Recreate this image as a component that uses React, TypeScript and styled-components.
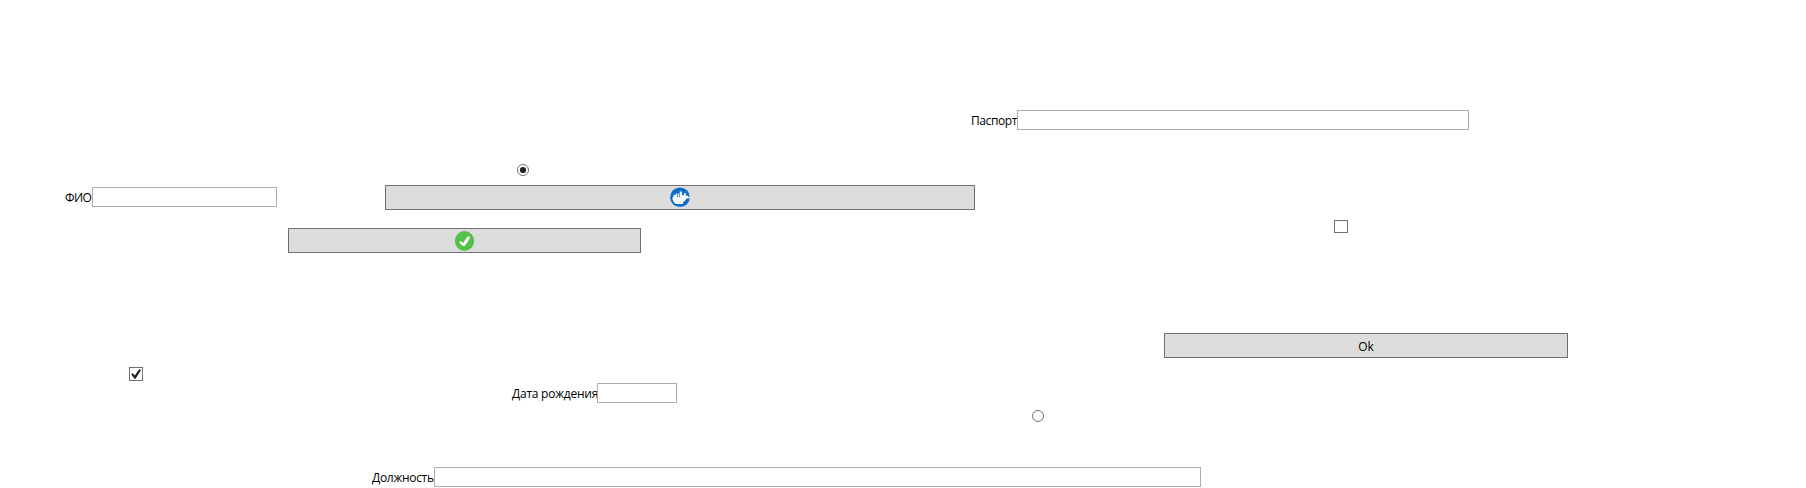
import React from "react";
import styled, { createGlobalStyle } from "styled-components";

const GlobalStyle = createGlobalStyle`
  body {
    margin: 0;
    background: #fff;
    color: #000;
    font: 12px/16px "Open Sans", "Noto Sans", sans-serif;
  }
`;

const Form = styled.form`
  display: flex;
  flex-direction: column;
  width: 1806px;
  height: 488px;
  overflow: hidden;
`;

const Row = styled.div<{ $gap: number; $indent: number }>`
  display: flex;
  flex: none;
  align-items: flex-start;
  margin-top: ${(p) => p.$gap}px;
  padding-left: ${(p) => p.$indent}px;
`;

const Spacer = styled.div<{ $width: number }>`
  flex: none;
  width: ${(p) => p.$width}px;
`;

const Field = styled.label<{ $drop?: number }>`
  display: flex;
  flex: none;
  height: 20px;
  margin-top: ${(p) => p.$drop ?? 0}px;
`;

const ButtonSlot = styled.div`
  flex: none;
  margin-top: 8px;
`;

const Caption = styled.span<{ $width: number; $tracking?: number }>`
  width: ${(p) => p.$width}px;
  padding-top: 3px;
  white-space: nowrap;
  letter-spacing: ${(p) => p.$tracking ?? 0}px;
`;

const TextBox = styled.input<{ $width: number }>`
  box-sizing: border-box;
  width: ${(p) => p.$width}px;
  height: 20px;
  margin: 0;
  padding: 0 3px;
  border: 1px solid #abadb3;
  border-radius: 0;
  background: #fff;
  font: inherit;
  outline: none;
`;

const Button = styled.button<{ $width: number }>`
  display: flex;
  flex: none;
  align-items: center;
  justify-content: center;
  box-sizing: border-box;
  width: ${(p) => p.$width}px;
  height: 25px;
  margin: 0;
  padding: 0;
  border: 1px solid #707070;
  border-radius: 0;
  background: #ddd;
  color: #000;
  font: inherit;
`;

const ButtonText = styled.span`
  padding-top: 2px;
`;

const CheckBox = styled.span<{ $height: number }>`
  display: flex;
  box-sizing: border-box;
  width: 14px;
  height: ${(p) => p.$height}px;
  border: 1px solid #707070;
  background: #fff;
`;

const Radio = styled.span`
  display: flex;
  width: 12px;
  height: 12px;
`;

const Glyph = styled.svg`
  display: block;
  flex: none;
`;

function RadioMark({ checked }: { checked?: boolean }) {
  return (
    <Radio role="radio" aria-checked={!!checked}>
      <Glyph width="12" height="12" viewBox="0 0 12 12">
        <circle cx="6" cy="6" r="5.5" fill="#fff" stroke="#707070" />
        {checked && <circle cx="6" cy="6" r="3.1" fill="#212121" />}
      </Glyph>
    </Radio>
  );
}

function CheckMark() {
  return (
    <Glyph width="12" height="12" viewBox="0 0 12 12">
      <path d="M1.2 6.3 2.8 5.2 4.8 7.5 9.3 1.1 11 2 5.6 10.8 4.4 10.8Z" fill="#212121" />
    </Glyph>
  );
}

function DockerIcon() {
  return (
    <Glyph width="20" height="21" viewBox="0 0 20 21">
      <circle cx="10" cy="10.3" r="9.8" fill="#0b6bc7" />
      <path
        d="M2.5 10H3.5V8H5.5V6.5H7V10H7.7V6.5H9V10H9.7V4.5H12V8H14V6H15.8V9L17.5 8.6 18.5 9.8H20V10.8L18 11.6H16.6L15 14 13 15.3V17H6L4 15.5 2.5 12.5Z"
        fill="#f4f6f8"
      />
    </Glyph>
  );
}

function AcceptIcon() {
  return (
    <Glyph width="19" height="20" viewBox="0 0 19 20">
      <ellipse cx="9.5" cy="10" rx="9.6" ry="10" fill="#54c148" />
      <path d="M4 11.2 5.8 9.9 8.3 12 12.4 5.4H14.8V7.5L9.8 15H8Z" fill="#fff" />
    </Glyph>
  );
}

export default function App() {
  return (
    <>
      <GlobalStyle />
      <Form>
        <Row $gap={110} $indent={971}>
          <Field>
            <Caption $width={46} $tracking={-0.4}>Паспорт</Caption>
            <TextBox $width={452} />
          </Field>
        </Row>
        <Row $gap={34} $indent={517}>
          <RadioMark checked />
        </Row>
        <Row $gap={9} $indent={65}>
          <Field $drop={2}>
            <Caption $width={27} $tracking={-0.6}>ФИО</Caption>
            <TextBox $width={185} />
          </Field>
          <Spacer $width={108} />
          <Button type="button" $width={590} aria-label="Docker">
            <DockerIcon />
          </Button>
        </Row>
        <Row $gap={10} $indent={288}>
          <ButtonSlot>
            <Button type="button" $width={353} aria-label="Принять">
              <AcceptIcon />
            </Button>
          </ButtonSlot>
          <Spacer $width={693} />
          <CheckBox $height={13} role="checkbox" aria-checked={false} />
        </Row>
        <Row $gap={80} $indent={1164}>
          <Button type="button" $width={404}>
            <ButtonText>Ok</ButtonText>
          </Button>
        </Row>
        <Row $gap={9} $indent={129}>
          <CheckBox $height={14} role="checkbox" aria-checked>
            <CheckMark />
          </CheckBox>
        </Row>
        <Row $gap={2} $indent={512}>
          <Field>
            <Caption $width={85} $tracking={-0.24}>Дата рождения</Caption>
            <TextBox $width={80} />
          </Field>
        </Row>
        <Row $gap={7} $indent={1032}>
          <RadioMark />
        </Row>
        <Row $gap={45} $indent={372}>
          <Field>
            <Caption $width={62} $tracking={-0.3}>Должность</Caption>
            <TextBox $width={767} />
          </Field>
        </Row>
      </Form>
    </>
  );
}
